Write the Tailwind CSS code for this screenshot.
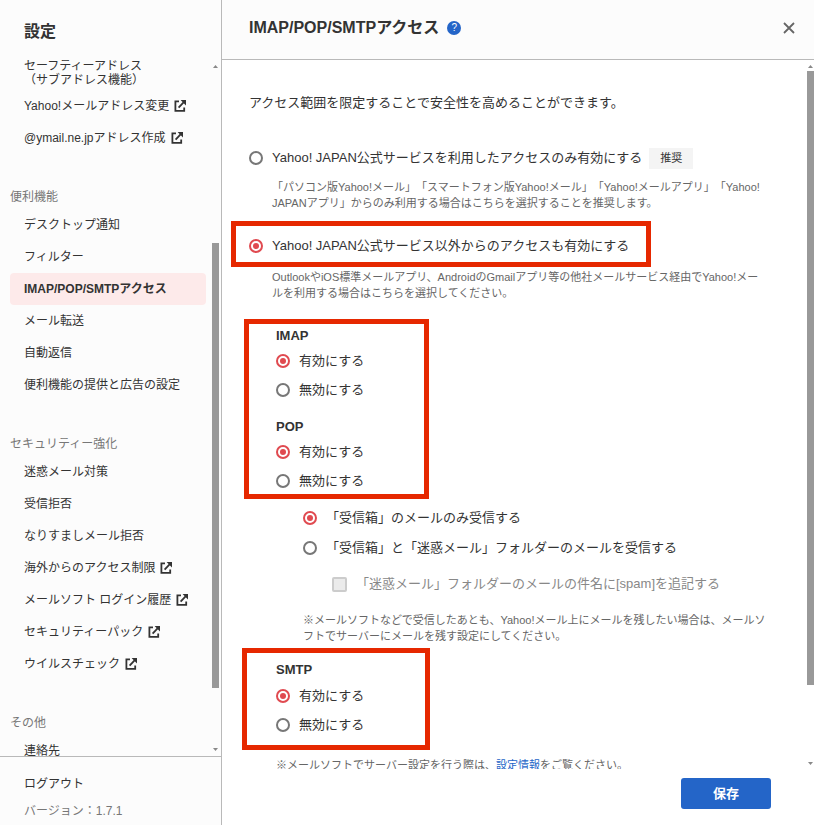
<!DOCTYPE html>
<html lang="ja">
<head>
    <meta charset="UTF-8">
    <meta name="viewport" content="width=device-width, initial-scale=1.0">
    <title>設定</title>
    <script src="https://cdn.jsdelivr.net/npm/@tailwindcss/browser@4"></script>
</head>
<body class="flex h-screen overflow-hidden bg-white font-['Liberation_Sans','Noto_Sans_CJK_JP',sans-serif] text-[13px] leading-5 text-[#333] [text-spacing-trim:space-all]">
    <!-- External link icon -->
    <svg class="hidden">
        <symbol id="external" viewBox="0 0 12 12">
            <path d="M5 1.4H1.4v9.4h8.8V7.5" fill="none" stroke="currentColor" stroke-width="1.8"/>
            <path d="M4.6 7.6L9.8 2.2" fill="none" stroke="currentColor" stroke-width="1.8"/>
            <path d="M6.6 0H12v5.4z" fill="currentColor"/>
        </symbol>
    </svg>

    <!-- Sidebar -->
    <aside class="flex w-[222px] shrink-0 flex-col border-r border-[#b9b9b9] bg-[#fcfcfc] text-xs leading-5">
        <h2 class="h-[59px] shrink-0 pt-[22px] pl-6 text-base leading-5 font-bold">設定</h2>
        <div class="flex min-h-0 flex-1">
            <nav class="min-w-0 flex-1 overflow-hidden pl-[10px] whitespace-nowrap">
                <a href="#" class="mb-[3px] block pl-[14px] leading-[14px]">セーフティーアドレス<br>（サブアドレス機能）</a>
                <a href="#" class="flex h-8 items-center gap-[5px] pl-[14px]">Yahoo!メールアドレス変更<svg class="size-3"><use href="#external"/></svg></a>
                <a href="#" class="flex h-8 items-center gap-[5px] pl-[14px]">@ymail.ne.jpアドレス作成<svg class="size-3"><use href="#external"/></svg></a>

                <h3 class="mt-[33px] mb-[2px] leading-5 text-[#777]">便利機能</h3>
                <a href="#" class="flex h-8 items-center pl-[14px]">デスクトップ通知</a>
                <a href="#" class="flex h-8 items-center pl-[14px]">フィルター</a>
                <a href="#" class="flex h-8 items-center rounded bg-[#fdeaea] pl-[14px] font-bold">IMAP/POP/SMTPアクセス</a>
                <a href="#" class="flex h-8 items-center pl-[14px]">メール転送</a>
                <a href="#" class="flex h-8 items-center pl-[14px]">自動返信</a>
                <a href="#" class="flex h-8 items-center pl-[14px]">便利機能の提供と広告の設定</a>

                <h3 class="mt-[33px] mb-[2px] leading-5 text-[#777]">セキュリティー強化</h3>
                <a href="#" class="flex h-8 items-center pl-[14px]">迷惑メール対策</a>
                <a href="#" class="flex h-8 items-center pl-[14px]">受信拒否</a>
                <a href="#" class="flex h-8 items-center pl-[14px]">なりすましメール拒否</a>
                <a href="#" class="flex h-8 items-center gap-[5px] pl-[14px]">海外からのアクセス制限<svg class="size-3"><use href="#external"/></svg></a>
                <a href="#" class="flex h-8 items-center gap-[5px] pl-[14px]">メールソフト ログイン履歴<svg class="size-3"><use href="#external"/></svg></a>
                <a href="#" class="flex h-8 items-center gap-[5px] pl-[14px]">セキュリティーパック<svg class="size-3"><use href="#external"/></svg></a>
                <a href="#" class="flex h-8 items-center gap-[5px] pl-[14px]">ウイルスチェック<svg class="size-3"><use href="#external"/></svg></a>

                <h3 class="mt-[33px] mb-[2px] leading-5 text-[#777]">その他</h3>
                <a href="#" class="flex h-8 items-center pl-[14px]">連絡先</a>
            </nav>
            <!-- Scrollbar -->
            <div class="flex w-[15px] shrink-0 flex-col items-end pt-[6px] pr-[2px] pb-[5px]">
                <svg class="h-[3px] w-[7px]" viewBox="0 0 7 3"><path d="M3.5 0L6 3H1z" fill="#888"/></svg>
                <div class="flex-[175]"></div>
                <div class="w-[7px] flex-[445] bg-[#999]"></div>
                <div class="flex-[60]"></div>
                <svg class="h-[3px] w-[7px]" viewBox="0 0 7 3"><path d="M3.5 3L6 0H1z" fill="#888"/></svg>
            </div>
        </div>
        <div class="flex h-[69px] shrink-0 flex-col gap-[7px] border-t border-[#b9b9b9] pt-[17px] pl-6">
            <a href="#">ログアウト</a>
            <p class="text-[#777]">バージョン：1.7.1</p>
        </div>
    </aside>

    <!-- Settings panel -->
    <main class="flex min-w-0 flex-1 flex-col">
        <header class="flex h-[60px] shrink-0 items-center border-b border-[#b9b9b9] bg-[#fcfcfc] pr-[19px] pb-[3px] pl-[27px]">
            <h1 class="text-base font-bold">IMAP/POP/SMTPアクセス</h1>
            <button type="button" aria-label="ヘルプ" class="ml-2 flex size-[14px] items-center justify-center rounded-full bg-[#2465c8] text-[10px] leading-none text-white">?</button>
            <button type="button" aria-label="閉じる" class="ml-auto">
                <svg class="size-3" viewBox="0 0 12 12"><path d="M1 1l10 10M11 1L1 11" stroke="#666" stroke-width="1.8"/></svg>
            </button>
        </header>

        <form class="flex min-h-0 flex-1 flex-col">
            <div class="flex min-h-0 flex-1">
                <div class="min-w-0 flex-1 overflow-hidden pt-[33px] pr-10 pl-[27px]">
                    <p>アクセス範囲を限定することで安全性を高めることができます。</p>

                    <div class="mt-[34px] flex h-[22px] items-center">
                        <input type="radio" name="access" id="access-official" class="mr-[9px] size-[14px] shrink-0 appearance-none rounded-full border-2 border-[#777] bg-white bg-clip-content p-[2px] checked:border-[#e04a50] checked:bg-[#e04a50]">
                        <label for="access-official">Yahoo! JAPAN公式サービスを利用したアクセスのみ有効にする</label>
                        <span class="ml-[7px] bg-[#f4f4f4] px-[11px] text-[11px] leading-[21px]">推奨</span>
                    </div>
                    <p class="mt-[10px] pl-[23px] text-[11px] leading-4 text-[#666]">「パソコン版Yahoo!メール」「スマートフォン版Yahoo!メール」「Yahoo!メールアプリ」「Yahoo! JAPANアプリ」からのみ利用する場合はこちらを選択することを推奨します。</p>

                    <div class="mt-[10px] -ml-[18px] flex h-[46px] w-[420px] items-center border-5 border-[#e62800] pt-1 pl-[13px]">
                        <input type="radio" name="access" id="access-all" checked class="mr-[9px] size-[14px] shrink-0 appearance-none rounded-full border-2 border-[#777] bg-white bg-clip-content p-[2px] checked:border-[#e04a50] checked:bg-[#e04a50]">
                        <label for="access-all">Yahoo! JAPAN公式サービス以外からのアクセスも有効にする</label>
                    </div>
                    <p class="mt-[2px] pl-[23px] text-[11px] leading-4 text-[#666]">OutlookやiOS標準メールアプリ、AndroidのGmailアプリ等の他社メールサービス経由でYahoo!メールを利用する場合はこちらを選択してください。</p>

                    <!-- IMAP / POP -->
                    <div class="mt-[18px] -ml-[5px] w-[185px] border-5 border-[#e62800] pt-[2px] pb-[3px] pl-[27px]">
                        <h2 class="font-bold">IMAP</h2>
                        <div class="mt-[5px] flex flex-col gap-[9px]">
                            <div class="flex items-center">
                                <input type="radio" name="imap" id="imap-on" checked class="mr-[9px] size-[14px] shrink-0 appearance-none rounded-full border-2 border-[#777] bg-white bg-clip-content p-[2px] checked:border-[#e04a50] checked:bg-[#e04a50]">
                                <label for="imap-on">有効にする</label>
                            </div>
                            <div class="flex items-center">
                                <input type="radio" name="imap" id="imap-off" class="mr-[9px] size-[14px] shrink-0 appearance-none rounded-full border-2 border-[#777] bg-white bg-clip-content p-[2px] checked:border-[#e04a50] checked:bg-[#e04a50]">
                                <label for="imap-off">無効にする</label>
                            </div>
                        </div>
                        <h2 class="mt-[17px] font-bold">POP</h2>
                        <div class="mt-[5px] flex flex-col gap-[9px]">
                            <div class="flex items-center">
                                <input type="radio" name="pop" id="pop-on" checked class="mr-[9px] size-[14px] shrink-0 appearance-none rounded-full border-2 border-[#777] bg-white bg-clip-content p-[2px] checked:border-[#e04a50] checked:bg-[#e04a50]">
                                <label for="pop-on">有効にする</label>
                            </div>
                            <div class="flex items-center">
                                <input type="radio" name="pop" id="pop-off" class="mr-[9px] size-[14px] shrink-0 appearance-none rounded-full border-2 border-[#777] bg-white bg-clip-content p-[2px] checked:border-[#e04a50] checked:bg-[#e04a50]">
                                <label for="pop-off">無効にする</label>
                            </div>
                        </div>
                    </div>

                    <!-- POP options -->
                    <div class="mt-[9px] pl-[54px]">
                        <div class="flex items-center">
                            <input type="radio" name="folder" id="folder-inbox" checked class="mr-[9px] size-[14px] shrink-0 appearance-none rounded-full border-2 border-[#777] bg-white bg-clip-content p-[2px] checked:border-[#e04a50] checked:bg-[#e04a50]">
                            <label for="folder-inbox">「受信箱」のメールのみ受信する</label>
                        </div>
                        <div class="mt-[10px] flex items-center">
                            <input type="radio" name="folder" id="folder-spam" class="mr-[9px] size-[14px] shrink-0 appearance-none rounded-full border-2 border-[#777] bg-white bg-clip-content p-[2px] checked:border-[#e04a50] checked:bg-[#e04a50]">
                            <label for="folder-spam">「受信箱」と「迷惑メール」フォルダーのメールを受信する</label>
                        </div>
                        <div class="mt-4 flex items-center pl-[29px]">
                            <input type="checkbox" id="spam-subject" disabled class="mr-[9px] size-[15px] shrink-0 appearance-none rounded-xs border-2 border-[#ccc] bg-[#ebebeb]">
                            <label for="spam-subject" class="text-[#888]">「迷惑メール」フォルダーのメールの件名に[spam]を追記する</label>
                        </div>
                        <p class="mt-[18px] text-[11px] leading-4 text-[#666]">※メールソフトなどで受信したあとも、Yahoo!メール上にメールを残したい場合は、メールソフトでサーバーにメールを残す設定にしてください。</p>
                    </div>

                    <!-- SMTP -->
                    <div class="mt-1 -ml-[7px] w-[188px] border-5 border-[#e62800] pt-[7px] pb-[10px] pl-[29px]">
                        <h2 class="font-bold">SMTP</h2>
                        <div class="mt-[6px] flex flex-col gap-[9px]">
                            <div class="flex items-center">
                                <input type="radio" name="smtp" id="smtp-on" checked class="mr-[9px] size-[14px] shrink-0 appearance-none rounded-full border-2 border-[#777] bg-white bg-clip-content p-[2px] checked:border-[#e04a50] checked:bg-[#e04a50]">
                                <label for="smtp-on">有効にする</label>
                            </div>
                            <div class="flex items-center">
                                <input type="radio" name="smtp" id="smtp-off" class="mr-[9px] size-[14px] shrink-0 appearance-none rounded-full border-2 border-[#777] bg-white bg-clip-content p-[2px] checked:border-[#e04a50] checked:bg-[#e04a50]">
                                <label for="smtp-off">無効にする</label>
                            </div>
                        </div>
                    </div>
                    <p class="mt-[7px] pl-[27px] text-[11px] leading-4 text-[#666]">※メールソフトでサーバー設定を行う際は、<a href="#" class="text-[#2465c8]">設定情報</a>をご覧ください。</p>
                </div>
                <!-- Scrollbar -->
                <div class="flex w-[7px] shrink-0 flex-col items-center pt-[5px] pb-[4px]">
                    <svg class="h-[3px] w-[7px]" viewBox="0 0 7 3"><path d="M3.5 0L6 3H1z" fill="#888"/></svg>
                    <div class="flex-[3]"></div>
                    <div class="w-[7px] flex-[613] bg-[#999]"></div>
                    <div class="flex-[77]"></div>
                    <svg class="h-[3px] w-[7px]" viewBox="0 0 7 3"><path d="M3.5 3L6 0H1z" fill="#888"/></svg>
                </div>
            </div>
            <div class="flex h-[56px] shrink-0 items-start justify-end pt-[9px] pr-[43px]">
                <button type="submit" class="h-[31px] w-[90px] rounded-[3px] bg-[#2465c8] font-bold text-white">保存</button>
            </div>
        </form>
    </main>
</body>
</html>
